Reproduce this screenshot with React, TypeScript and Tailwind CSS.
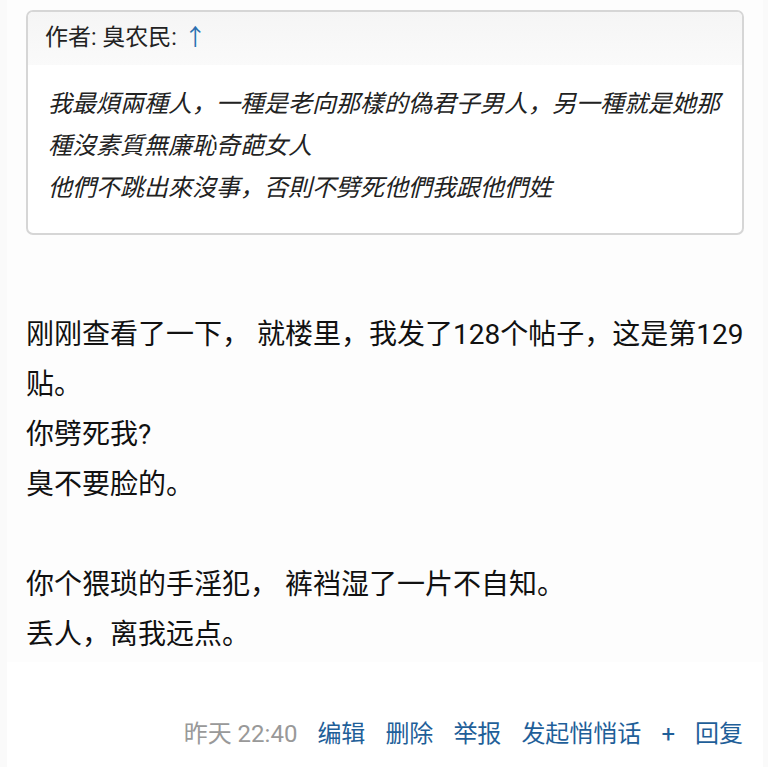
export default function App() {
  const actions = ["编辑", "删除", "举报", "发起悄悄话", "+", "回复"];

  return (
    <div className="min-h-screen bg-[#fafafa] pl-[7px] pr-[5px] font-['Roboto','Noto_Sans_CJK_SC',sans-serif]">
      <div className="bg-white min-h-screen">
        <div className="bg-[#fdfdfd] px-[19px] pt-[10px] pb-[2px]">
          {/* quote */}
          <div className="rounded-[7px] border-2 border-[#d6d6d6] bg-white overflow-hidden">
            <div className="h-[53px] bg-gradient-to-b from-[#f5f5f5] to-[#fafafa] px-[17px] flex items-center text-[23px] text-[#222]">
              作者: 臭农民: <span className="ml-[7px] text-[#2a6fb0]">↑</span>
            </div>
            <div className="px-[20px] pt-[18px] pb-[24px] text-[24px] leading-[42px] italic text-[#222]">
              <p>我最煩兩種人，一種是老向那樣的偽君子男人，另一種就是她那種沒素質無廉恥奇葩女人</p>
              <p>他們不跳出來沒事，否則不劈死他們我跟他們姓</p>
            </div>
          </div>

          {/* main text */}
          <div className="mt-[75px] text-[28px] leading-[50px] text-[#111]">
            <p>刚刚查看了一下， 就楼里，我发了128个帖子，这是第129贴。</p>
            <p>你劈死我?</p>
            <p>臭不要脸的。</p>
            <p>&nbsp;</p>
            <p>你个猥琐的手淫犯， 裤裆湿了一片不自知。</p>
            <p>丢人，离我远点。</p>
          </div>
        </div>

        {/* footer */}
        <div className="flex justify-end items-center gap-[20px] px-[20px] pt-[52px] text-[24px] leading-[40px]">
          <span className="text-[#999]">昨天 22:40</span>
          {actions.map((a) => (
            <span key={a} className="text-[#1f5f99]">
              {a}
            </span>
          ))}
        </div>
      </div>
    </div>
  );
}
